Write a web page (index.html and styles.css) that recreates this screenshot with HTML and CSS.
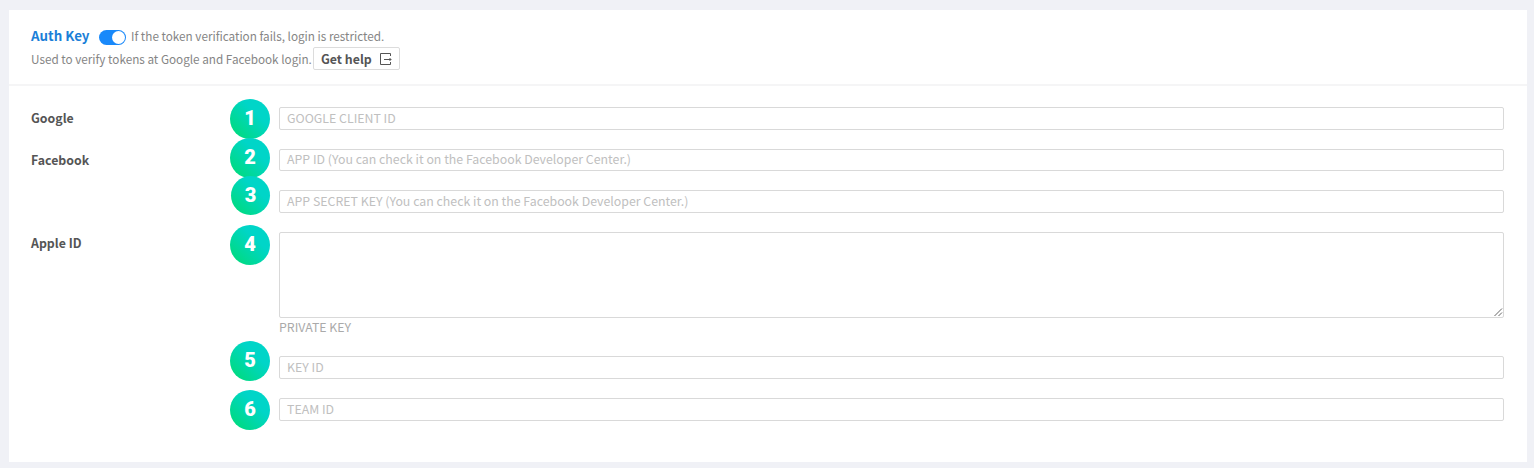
FILE: index.html
```html
<!DOCTYPE html>
<html lang="en">
<head>
<meta charset="utf-8">
<title>Auth Key</title>
<link rel="stylesheet" href="styles.css">
</head>
<body>
<main class="panel">
  <header class="head">
    <div class="line title-line">
      <h1 class="title">Auth Key</h1>
      <span class="switch"><span class="knob"></span></span>
      <span class="note title-note">If the token verification fails, login is restricted.</span>
    </div>
    <div class="line help-line">
      <span class="note used-note">Used to verify tokens at Google and Facebook login.</span>
      <button class="help"><span class="help-text">Get help</span>
        <svg class="help-icon" width="12" height="12" viewBox="0 0 12 12" fill="none" stroke="#555" stroke-width="1"><path d="M10.5 3V.5H.5v11h10V9M4 6.5h7M9.5 5l1.5 1.5L9.5 8"/></svg>
      </button>
    </div>
  </header>
  <form class="form">
    <div class="row"><span class="label">Google</span><div class="field"><span class="badge b1">1</span><div class="input">GOOGLE CLIENT ID</div></div></div>
    <div class="row"><span class="label">Facebook</span><div class="field"><span class="badge b2">2</span><div class="input short">APP ID (You can check it on the Facebook Developer Center.)</div></div></div>
    <div class="row"><span class="label"></span><div class="field"><span class="badge b3">3</span><div class="input">APP SECRET KEY (You can check it on the Facebook Developer Center.)</div></div></div>
    <div class="row tall"><span class="label">Apple ID</span><div class="field"><span class="badge b4">4</span><div class="area"><svg class="grip" width="9" height="9" viewBox="0 0 9 9" stroke="#666" stroke-width="1"><path d="M.5 8 8 .5M4.5 8 8 4.5"/></svg></div><div class="caption">PRIVATE KEY</div></div></div>
    <div class="row"><span class="label"></span><div class="field"><span class="badge b5">5</span><div class="input">KEY ID</div></div></div>
    <div class="row"><span class="label"></span><div class="field"><span class="badge b6">6</span><div class="input">TEAM ID</div></div></div>
  </form>
</main>
</body>
</html>
```
FILE: styles.css
```css
* { box-sizing: border-box; }
body {
  margin: 0;
  height: 468px;
  padding: 10px 7px 6px 9px;
  overflow: hidden;
  background: #f0f1f6;
  font: 12.35px/20px "Noto Sans CJK KR", "Noto Sans", sans-serif;
  color: #555;
}
.panel { height: 452px; background: #fff; }
.head {
  height: 76px;
  padding: 15px 22px 0;
  border-bottom: 2px solid #f5f5f6;
}
.line { display: flex; align-items: center; white-space: nowrap; }
.title-line { height: 22px; }
.title { margin: 0; width: 68px; font-size: 13.35px; line-height: 22px; font-weight: 700; color: #1b7fd8; }
.switch {
  display: flex;
  justify-content: flex-end;
  width: 27px;
  height: 15px;
  margin: 2px 5px 0 0;
  padding: 1px;
  border-radius: 8px;
  background: #1989fa;
}
.knob { width: 13px; height: 13px; border-radius: 50%; background: #fff; }
.note { color: #858585; font-size: 11.72px; }
.used-note { width: 282px; }
.help-line { height: 24px; }
.help {
  display: flex;
  align-items: center;
  width: 87px;
  height: 23px;
  margin-top: -2px;
  padding: 0 7px;
  border: 1px solid #dcdcdc;
  border-radius: 2px;
  background: #fff;
  font: 700 12.35px/20px "Noto Sans CJK KR", sans-serif;
  color: #555;
}
.help-text { width: 59px; padding-top: 2px; text-align: left; white-space: nowrap; }
.help-icon { flex: none; margin-top: 2px; }
.form { padding: 21px 22px 0; }
.row { display: flex; height: 41.6px; }
.row.tall { height: 124.4px; }
.label { width: 248px; padding-top: 1px; font-weight: 700; }
.field { position: relative; flex: none; width: 1225px; }
.input {
  height: 23px;
  padding: 0 7px;
  border: 1px solid #d9d9d9;
  border-radius: 2px;
  line-height: 21px;
  color: #c0c0c0;
  white-space: nowrap;
}
.input.short { height: 22px; line-height: 19px; }
.area {
  display: flex;
  justify-content: flex-end;
  align-items: flex-end;
  height: 86px;
  border: 1px solid #d9d9d9;
  border-radius: 2px;
}
.caption { line-height: 18px; color: #aaa; }
.badge {
  position: absolute;
  left: -49px;
  width: 40px;
  height: 40px;
  border-radius: 50%;
  background: linear-gradient(45deg, #00db78 5%, #00d5c8 65%);
  color: #fff;
  font: 900 20px/38px Roboto, "Liberation Sans", sans-serif;
  text-align: center;
}
.b1 { top: -8px; }
.b2 { top: -11px; }
.b3 { top: -14px; left: -48px; width: 39px; height: 39px; }
.b4 { top: -7px; }
.b5 { top: -15px; }
.b6 { top: -8px; }
```
